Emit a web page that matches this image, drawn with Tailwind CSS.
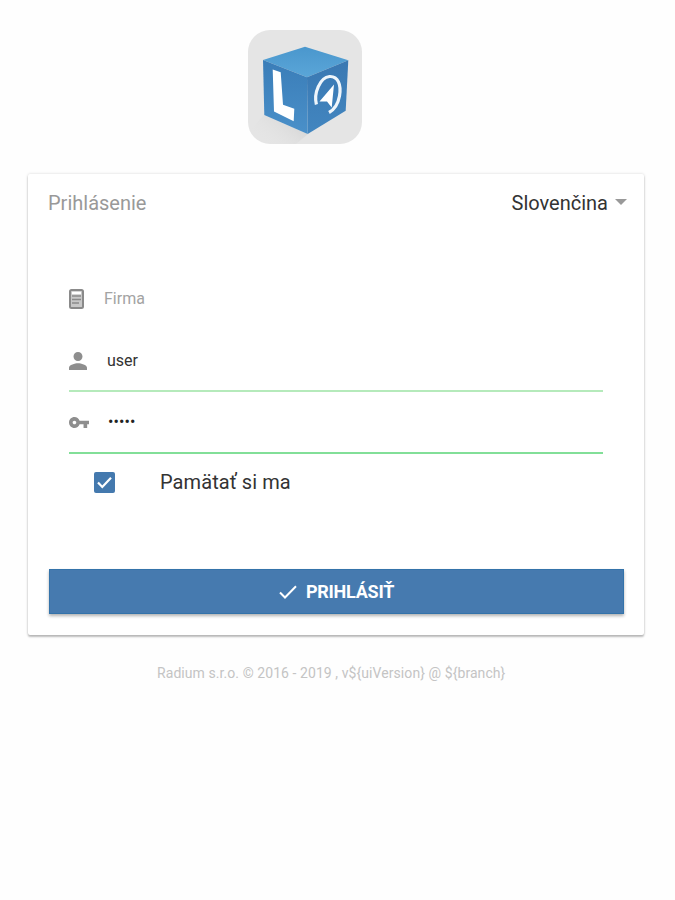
<!DOCTYPE html>
<html lang="sk">
<head>
  <meta charset="UTF-8" />
  <meta name="viewport" content="width=device-width, initial-scale=1.0"/>
  <title>Prihlásenie</title>
  <script src="https://cdn.jsdelivr.net/npm/@tailwindcss/browser@4"></script>
</head>

<body class="bg-[#fefefe] min-h-screen overflow-hidden font-[Roboto,sans-serif] text-[#333]">

  <!-- Logo -->
  <header class="pt-[30px] pl-[248px]">
    <svg class="block w-[114px] h-[114px]" viewBox="0 0 114 114">
      <defs>
        <linearGradient id="top" x1="0" y1="0" x2="0" y2="1">
          <stop offset="0" stop-color="#4a97cd"/>
          <stop offset="1" stop-color="#5aa6d8"/>
        </linearGradient>
        <linearGradient id="left" x1="0" y1="0" x2="0" y2="1">
          <stop offset="0" stop-color="#3a7db8"/>
          <stop offset="1" stop-color="#4a90c9"/>
        </linearGradient>
        <linearGradient id="right" x1="0" y1="0" x2="0" y2="1">
          <stop offset="0" stop-color="#3a78b2"/>
          <stop offset="1" stop-color="#4286c0"/>
        </linearGradient>
        <linearGradient id="shade" x1="1" y1="0" x2="0" y2="0.6">
          <stop offset="0" stop-color="#cccccc"/>
          <stop offset="1" stop-color="#e5e5e5" stop-opacity="0"/>
        </linearGradient>
      </defs>
      <rect width="114" height="114" rx="22" fill="#e5e5e5"/>
      <path d="M16 85L60 104L48 114H22Q6 113 2 100Z" fill="url(#shade)"/>
      <path d="M57 16.7L100.3 30.3L59 47.3L15 30Z" fill="url(#top)"/>
      <path d="M15 30L59 47.3L59.7 104L16.3 85Z" fill="url(#left)"/>
      <path d="M59 47.3L100.3 30.3L97.7 80.7L59.7 104Z" fill="url(#right)"/>
      <path d="M24.700 39.500L32.7 42.300L35 74.700L46.3 78.7L45.7 91.3L26 81.500Z" fill="#fff"/>
      <path d="M68.4 74.5C65.5 63 72 47.5 81.500 46.500C90 46 93.500 55 91.500 66C90 74 86.500 79.500 81 82.500" fill="none" stroke="#eef5fb" stroke-width="3.200"/>
      <path d="M86 54.500L83.700 77.500L79 71.500L71.500 71.500Z" fill="#fff"/>
    </svg>
  </header>

  <!-- Login card -->
  <main class="mt-[30px] ml-[28px] w-[616px] h-[461px] bg-white rounded-[2px] shadow-[0_2px_2px_rgba(0,0,0,0.24),0_0_3px_rgba(0,0,0,0.16)] px-[21px] pt-[16px]">
    <div class="flex justify-between items-center h-[26px]">
      <h1 class="text-[20px] text-[#999] -ml-px">Prihlásenie</h1>
      <div class="flex items-center gap-[7px] -mr-[4px] text-[20px]">
        <span>Slovenčina</span>
        <svg class="w-[12px] h-[6px] -mt-[2px]" viewBox="0 0 12 6"><path d="M0 0H12L6 6Z" fill="#999"/></svg>
      </div>
    </div>

    <form class="mt-[52px] mx-[20px]">
      <!-- Company -->
      <div class="flex items-center h-[62px] pb-px text-[#a3a3a3]">
        <svg class="w-[15px] h-[20px]" viewBox="0 0 15 20" fill="none" stroke="#8a8a8a">
          <rect x="1" y="1" width="13" height="18" rx="1.500" fill="#c8c8c8" stroke-width="2"/>
          <path d="M3 4H12" stroke="#fff" stroke-width="2.500"/>
          <path d="M3 7H12M3 10.500H12M3 14H10" stroke-width="1.300"/>
        </svg>
        <span class="ml-[20px] text-[16px]">Firma</span>
      </div>

      <!-- User -->
      <div class="flex items-center h-[62px] pt-[2px] w-[534px] border-b-2 border-[#b5eabb]">
        <svg class="w-[18px] h-[18px]" viewBox="4 4 16 16" fill="#8e8e8e"><path d="M12 12c2.210 0 4-1.790 4-4s-1.790-4-4-4-4 1.790-4 4 1.790 4 4 4zm0 2c-2.670 0-8 1.340-8 4v2h16v-2c0-2.660-5.330-4-8-4z"/></svg>
        <span class="ml-[20px] text-[16px]">user</span>
      </div>

      <!-- Password -->
      <div class="flex items-center h-[62px] w-[534px] border-b-2 border-[#82df98]">
        <svg class="w-[20px] h-[11px]" viewBox="1 6 22 12" preserveAspectRatio="none" fill="#8e8e8e"><path d="M12.650 10C11.830 7.670 9.610 6 7 6c-3.310 0-6 2.690-6 6s2.690 6 6 6c2.610 0 4.830-1.670 5.650-4H17v4h4v-4h2v-4H12.650zM7 14c-1.100 0-2-.900-2-2s.900-2 2-2 2 .900 2 2-.900 2-2 2z"/></svg>
        <span class="ml-[19px] text-[16px] tracking-[0.1px] text-[#222]">•••••</span>
      </div>

      <!-- Remember me -->
      <div class="flex items-center mt-[14px] ml-[25px] h-[28px]">
        <svg class="w-[21px] h-[21px]" viewBox="0 0 21 21">
          <rect width="21" height="21" rx="2" fill="#4479ae"/>
          <path d="M4 10.500L8.300 15L17 5.700" fill="none" stroke="#fff" stroke-width="2.200"/>
        </svg>
        <span class="ml-[45px] text-[20px] tracking-[0.08px]">Pamätať si ma</span>
      </div>
    </form>

    <button type="button" class="mt-[73px] flex w-[575px] h-[45px] items-center justify-center gap-[9px] bg-[#467aaf] border border-[#3473aa] text-white shadow-[0_2px_3px_rgba(0,0,0,0.3)]">
      <svg class="w-[18px] h-[14px]" viewBox="0 0 18 14"><path d="M1 7.500L6 12.500L17 1.300" fill="none" stroke="#fff" stroke-width="2"/></svg>
      <span class="text-[18px] font-bold tracking-[-0.25px]">PRIHLÁSIŤ</span>
    </button>
  </main>

  <!-- Footer -->
  <footer class="mt-[28px] ml-[157px] text-[14px] leading-[20px] tracking-[0.07px] text-[#c4c4c4] whitespace-nowrap">Radium s.r.o. © 2016 - 2019 , v${uiVersion} @ ${branch}</footer>

</body>
</html>
